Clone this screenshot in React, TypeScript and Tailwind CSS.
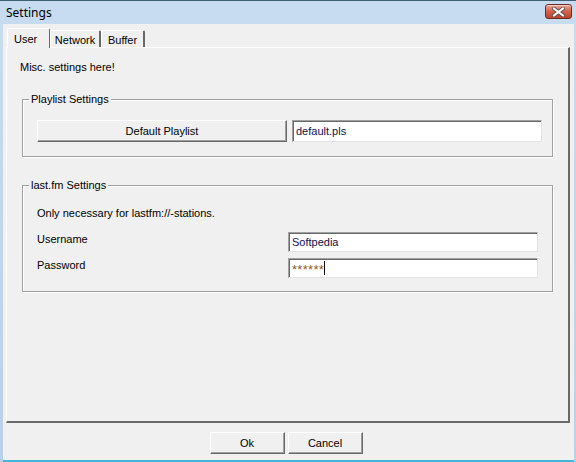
import React from "react";

const font = { fontFamily: '"Liberation Sans", Arial, sans-serif' };

function Tab({ label, active, w }: { label: string; active?: boolean; w: string }) {
  if (active) {
    return (
      <div className={`relative z-10 -mb-px h-[20px] ${w} pl-[6px] pt-[3px] bg-[#f0f0f0] border-t border-l border-white border-r border-r-[#696969] rounded-t-[2px] text-[11px] leading-[14px]`}>
        {label}
      </div>
    );
  }
  return (
    <div className={`h-[17px] ${w} pt-[2px] text-center bg-[#f0f0f0] border-t border-l border-white border-r-2 border-r-[#696969] rounded-t-[2px] text-[11px] leading-[14px]`}>
      {label}
    </div>
  );
}

function Group({ label, className, children }: { label: string; className: string; children: React.ReactNode }) {
  return (
    <div
      className={`relative mx-[15px] border border-[#a0a0a0] shadow-[1px_1px_0_#fff,inset_1px_1px_0_#fff] ${className}`}
    >
      <div className="absolute -top-[8px] left-[6px] px-[2px] bg-[#f0f0f0] text-[11px] leading-[14px]">{label}</div>
      {children}
    </div>
  );
}

function TextBox({ value, h, className = "" }: { value: React.ReactNode; h: string; className?: string }) {
  return (
    <div
      className={`w-[250px] ${h} bg-white border border-t-[#a0a0a0] border-l-[#a0a0a0] border-r-[#e3e3e3] border-b-[#e3e3e3] shadow-[inset_1px_1px_0_#696969] pl-[3px] flex items-center text-[11px] text-[#10104a] ${className}`}
    >
      {value}
    </div>
  );
}

function Button({ label, className }: { label: string; className: string }) {
  return (
    <div
      className={`flex items-center justify-center bg-[#f0f0f0] border border-t-white border-l-white border-r-[#696969] border-b-[#696969] shadow-[inset_-1px_-1px_0_#a0a0a0] text-[11px] ${className}`}
    >
      {label}
    </div>
  );
}

export default function App() {
  return (
    <div
      style={font}
      className="w-[576px] h-[462px] flex flex-col bg-gradient-to-b from-[#c8dcf1] to-[#b8d0ea] border-t border-t-[#3c6070] text-black overflow-hidden"
    >
      {/* Title bar */}
      <div className="h-[23px] flex items-center justify-between pl-[6px] pr-[4px]">
        <span className="text-[12px] text-black" style={{ fontFamily: '"Noto Sans", "Liberation Sans", sans-serif' }}>
          Settings
        </span>
        <div className="w-[27px] h-[15px] mt-[-2px] rounded-[3px] border border-[#6e2b22] bg-gradient-to-b from-[#e9a797] via-[#d4614a] to-[#c0422b] flex items-center justify-center shadow-[inset_0_1px_0_rgba(255,255,255,0.5)]">
          <svg width="13" height="10" viewBox="0 0 13 10">
            <path d="M2 1.5 L11 8.5 M11 1.5 L2 8.5" stroke="#4a4a4a" strokeWidth="3.6" strokeLinecap="square" />
            <path d="M2 1.5 L11 8.5 M11 1.5 L2 8.5" stroke="#ffffff" strokeWidth="2" strokeLinecap="square" />
          </svg>
        </div>
      </div>

      {/* Body */}
      <div className="flex-1 ml-[3px] mr-[2px] bg-[#f0f0f0] border-b-2 border-b-[#3fb8dc] flex flex-col pl-[3px] pr-[4px]">
        {/* Tabs */}
        <div className="flex items-end h-[23px] pl-[1px]">
          <Tab label="User" active w="w-[43px]" />
          <Tab label="Network" w="w-[51px]" />
          <Tab label="Buffer" w="w-[44px]" />
        </div>

        {/* Panel */}
        <div className="h-[376px] border-t border-l border-white border-r-2 border-b-2 border-r-[#696969] border-b-[#696969] flex flex-col">
          <div className="pl-[13px] pt-[12px] text-[11px] leading-[14px]">Misc. settings here!</div>

          <Group label="Playlist Settings" className="mt-[25px] h-[58px] flex items-start gap-[5px] pl-[14px] pt-[20px]">
            <Button label="Default Playlist" className="w-[250px] h-[22px]" />
            <TextBox value="default.pls" h="h-[22px]" />
          </Group>

          <Group label="last.fm Settings" className="mt-[28px] h-[107px] flex flex-col pl-[14px] pt-[20px] text-[11px]">
            <div className="leading-[14px]">Only necessary for lastfm://-stations.</div>
            <div className="flex items-center justify-between mt-[12px] pr-[14px]">
              <span className="-mt-[6px]">Username</span>
              <TextBox value="Softpedia" h="h-[20px]" />
            </div>
            <div className="flex items-center justify-between mt-[6px] pr-[14px]">
              <span className="-mt-[6px]">Password</span>
              <TextBox
                h="h-[20px]"
                value={
                  <span className="flex items-center">
                    <span className="text-[#9a5a28] text-[13px] leading-[14px] mt-[3px] tracking-[0.3px]">******</span>
                    <span className="w-px h-[14px] bg-black" />
                  </span>
                }
              />
            </div>
          </Group>
        </div>

        {/* Footer buttons */}
        <div className="flex justify-center gap-[3px] mt-[9px] pr-[4px]">
          <Button label="Ok" className="w-[75px] h-[22px]" />
          <Button label="Cancel" className="w-[75px] h-[22px]" />
        </div>
      </div>
    </div>
  );
}
